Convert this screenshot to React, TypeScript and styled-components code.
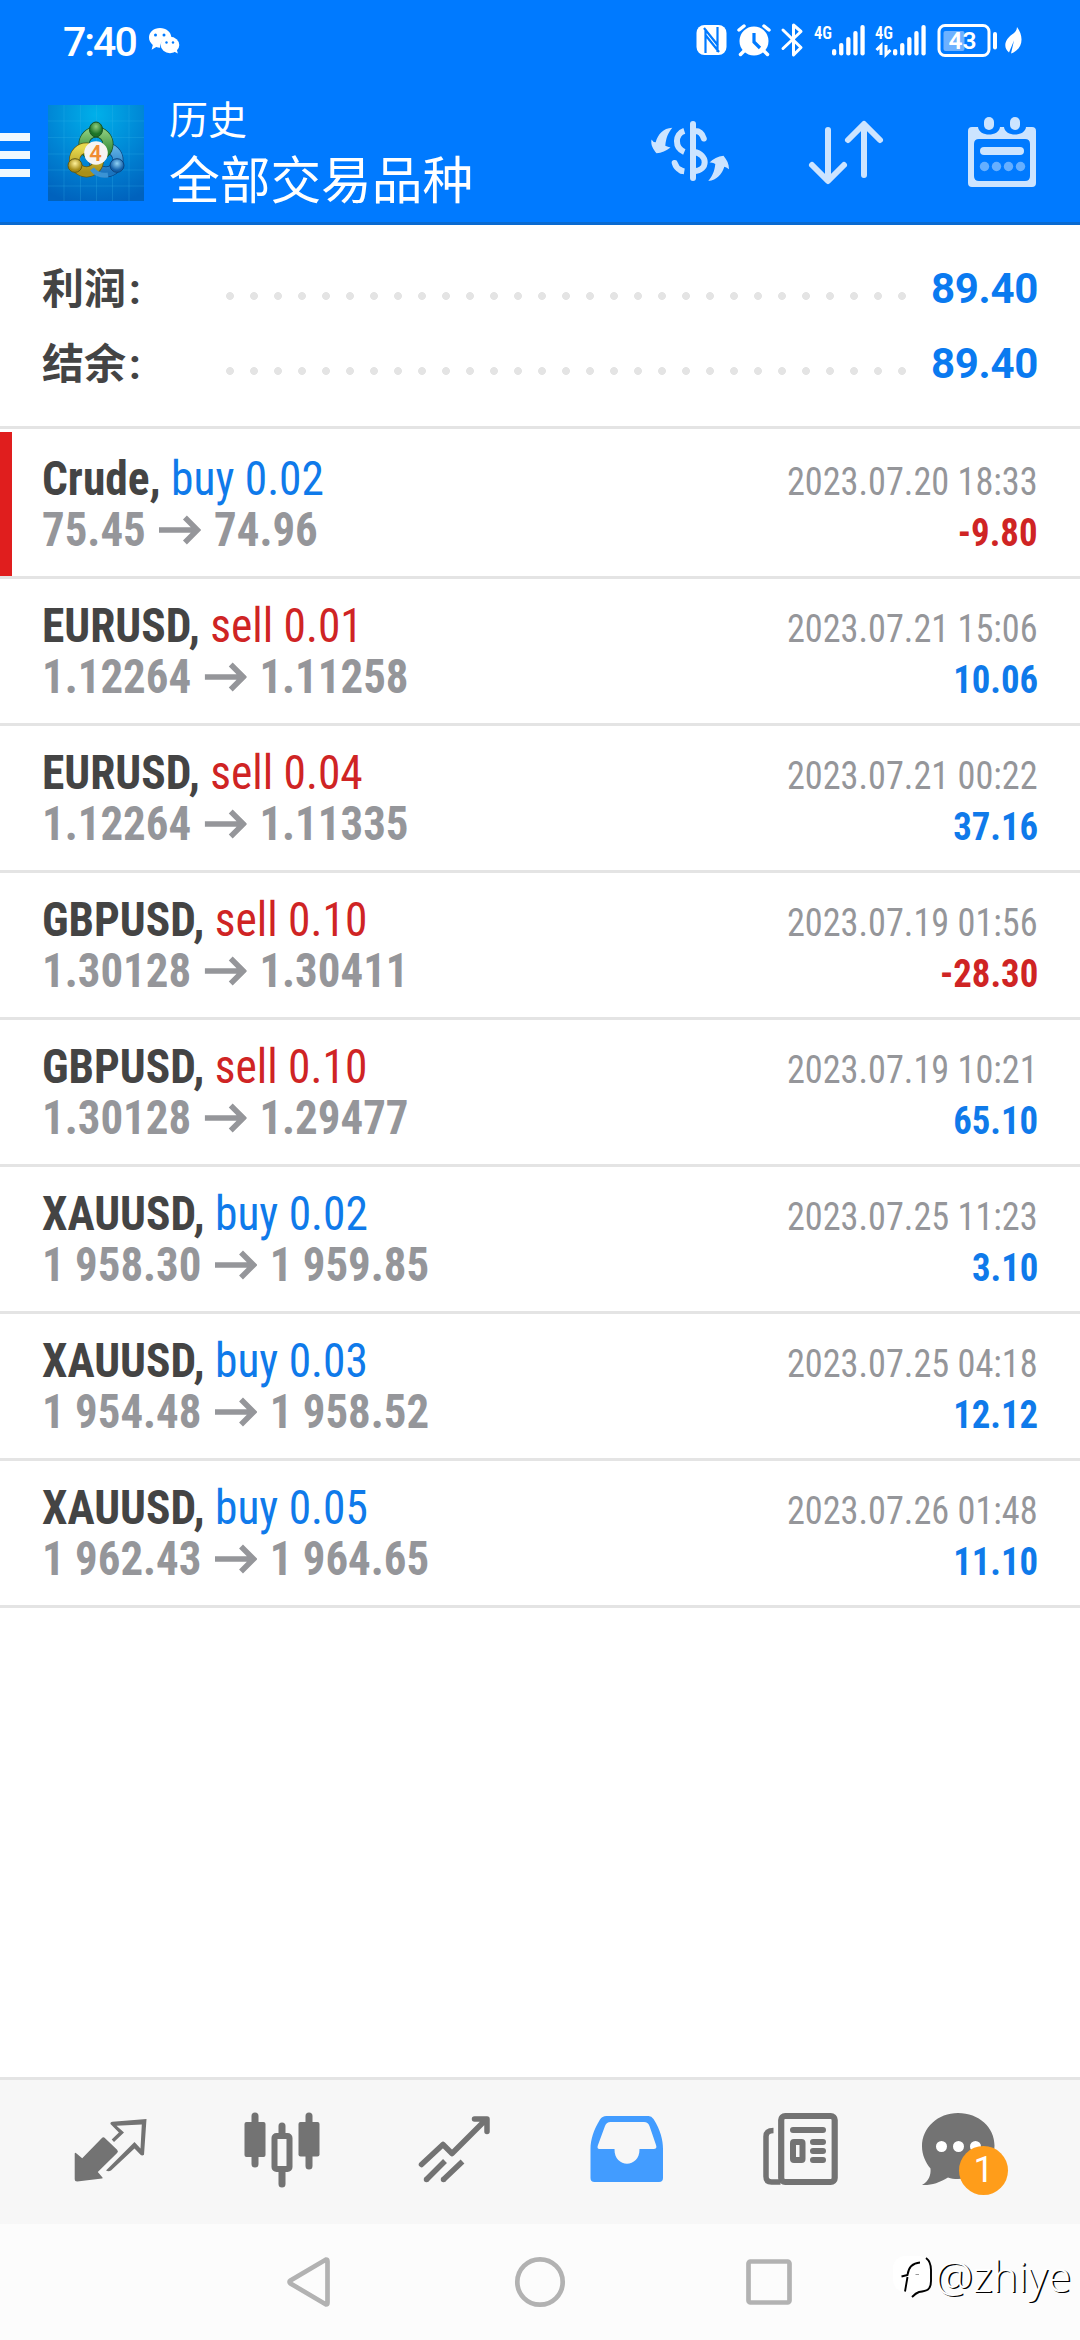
import React from 'react';
import styled, { createGlobalStyle, css } from 'styled-components';

const Global = createGlobalStyle`
  * { box-sizing: border-box; }
  body { margin: 0; background: #fff; }
`;

const cjk = css`font-family: Roboto, "Noto Sans CJK SC", sans-serif;`;
const condensed = css`
  font-family: "Roboto Condensed", Roboto, sans-serif;
  font-stretch: 75%;
`;

const Screen = styled.div`
  width: 1080px;
  height: 2340px;
  display: flex;
  flex-direction: column;
  background: #fff;
  overflow: hidden;
  ${cjk}
`;

const Header = styled.header`
  height: 225px;
  background: #007aff;
  border-bottom: 3px solid #0a6ad0;
  display: flex;
  flex-direction: column;
`;

const StatusBar = styled.div`
  height: 84px;
  display: flex;

  svg:last-child { margin-left: auto; }
`;

const Clock = styled.div`
  width: 146px;
  padding-left: 63px;
  color: #fff;
  font-size: 41px;
  font-weight: 500;
  line-height: 84px;
  font-family: Roboto, sans-serif;
  letter-spacing: -2px;
  white-space: nowrap;
`;

const AppBar = styled.div`
  height: 138px;
  display: flex;
`;

const Burger = styled.div`
  width: 48px;
  display: flex;
  flex-direction: column;
  gap: 10px;
  padding-top: 49px;
`;

const BurgerLine = styled.i`
  width: 30px;
  height: 8px;
  background: #f0f8ff;
`;

const LogoSlot = styled.div`
  padding-top: 21px;
`;

const Titles = styled.div`
  flex: 1;
  padding: 14px 0 0 25px;
  color: #fff;
  white-space: nowrap;
`;

const Subtitle = styled.div`
  font-size: 39px;
  line-height: 46px;
`;

const Title = styled.div`
  font-size: 50.7px;
  line-height: 68px;
  margin-top: 4px;
`;

const Summary = styled.section`
  height: 204px;
  padding: 24px 42px 0 42px;
  border-bottom: 3px solid #e4e4e4;
`;

const SummaryRow = styled.div`
  height: 75px;
  display: flex;
  align-items: center;
`;

const SummaryLabel = styled.span`
  width: 184px;
  margin-top: -3px;
  font-size: 42px;
  font-weight: 700;
  color: #444;
`;

const Colon = styled.span`
  margin-left: 3px;
`;

const Dots = styled.span`
  width: 696px;
  height: 8px;
  margin-top: 18px;
  background: radial-gradient(circle at 4px 4px, #e4e4e4 3.6px, transparent 4.2px) 0 0 / 24px 8px repeat-x;
`;

const SummaryValue = styled.span`
  flex: 1;
  margin-top: 4px;
  text-align: right;
  font-size: 42px;
  font-weight: 700;
  letter-spacing: -0.3px;
  color: #0a7af0;
  white-space: nowrap;
`;

const List = styled.main`
  flex: 1;
  padding-top: 3px;
`;

const Deal = styled.article`
  height: 147px;
  display: flex;
  justify-content: space-between;
  padding-right: 42px;
  border-bottom: 3px solid #e4e4e4;
  ${condensed}
`;

const Marker = styled.i<{ $on: boolean }>`
  width: 12px;
  margin-right: 30px;
  background: ${p => (p.$on ? '#e01e1e' : 'transparent')};
`;

const Column = styled.div<{ $end?: boolean }>`
  display: flex;
  flex-direction: column;
  flex: 1;
  align-items: ${p => (p.$end ? 'flex-end' : 'flex-start')};
  line-height: 51px;
  white-space: pre;
  padding-top: ${p => (p.$end ? 25 : 21)}px;
`;

const Instrument = styled.div`
  font-size: 48px;
  font-weight: 700;
  color: #444;
  transform: scaleX(0.946);
  transform-origin: left;
`;

const Side = styled.span<{ $sell: boolean }>`
  font-weight: 400;
  color: ${p => (p.$sell ? '#cf2424' : '#0f7aea')};
`;

const Prices = styled.div`
  display: flex;
  align-items: center;
  height: 51px;
  font-size: 48px;
  font-weight: 700;
  color: #95969a;
  transform: scaleX(0.935);
  transform-origin: left;
`;

const ArrowIcon = styled.svg`
  width: 45px;
  height: 30px;
  margin: 0 14px;
`;

const Time = styled.div`
  font-size: 39px;
  color: #95969a;
  transform: scaleX(0.93);
  transform-origin: right;
`;

const Profit = styled.div<{ $loss: boolean }>`
  font-size: 39px;
  font-weight: 700;
  color: ${p => (p.$loss ? '#cf2424' : '#0f7aea')};
  transform: scaleX(0.943);
  transform-origin: right;
`;

const TabBar = styled.nav`
  height: 147px;
  display: flex;
  padding-left: 21px;
  background: #f7f7f7;
  border-top: 3px solid #e4e4e4;
`;

const Tab = styled.div`
  position: relative;
  width: 173px;
  display: flex;
  justify-content: center;
  padding-top: 22px;

  svg { overflow: visible; }
`;

const Badge = styled.span`
  position: absolute;
  left: 73px;
  top: 66px;
  width: 49px;
  height: 49px;
  border-radius: 50%;
  background: #ff9d1a;
  color: #fff;
  font-size: 36px;
  line-height: 49px;
  text-align: center;
`;

const SystemNav = styled.footer`
  position: relative;
  height: 116px;
  background: #fcfcfc;
  display: flex;
`;

const Watermark = styled.div`
  position: absolute;
  right: 9px;
  top: 28px;
  display: flex;
  align-items: center;
  font-family: "Noto Sans", sans-serif;
  font-size: 42.5px;
  font-weight: 300;
  line-height: 46px;
  color: #fff;
  text-shadow: 1.5px 1.2px 0 #000;
`;

/* Drawings share the screen's coordinate space through their view boxes. */
const Drawing = ({ x, y, w, h, children }: { x: number; y: number; w: number; h: number; children: React.ReactNode }) => (
  <svg width={w} height={h} viewBox={`${x} ${y} ${w} ${h}`} fill="none">{children}</svg>
);

const WeChat = () => (
  <Drawing x={146} y={0} w={40} h={84}>
    <path d="M160 28c-6.300 0-11 4.200-11 9.600 0 3 1.400 5.500 3.800 7.300l-1.200 4.800 4.600-2.600c1.300.4 2.500.6 3.900.6 0-6 4.800-10.400 11.300-10.400C171 32 166.200 28 160 28z" fill="#fff" />
    <ellipse cx="170" cy="45" rx="9.300" ry="8.200" fill="#fff" />
    <path d="M173 51l4.800 2.600-1.200-5z" fill="#fff" />
    <g fill="#007aff"><circle cx="155.500" cy="35" r="1.500" /><circle cx="164" cy="35" r="1.500" /><circle cx="166.500" cy="42.500" r="1.200" /><circle cx="173" cy="42.500" r="1.200" /></g>
  </Drawing>
);

const SignalBars = ({ x }: { x: number }) => (
  <g fill="#fff">
    {[0, 1, 2, 3, 4].map(i => (
      <rect key={i} x={x + i * 7.100} y={49 - i * 6} width="4.300" height={6.500 + i * 6} rx="2.100" />
    ))}
  </g>
);

const StatusIcons = () => (
  <Drawing x={690} y={0} w={390} h={84}>
    <rect x="696.500" y="25" width="30" height="30" rx="8" fill="#fff" />
    <path d="M705.500 53V29M704 28l14 17.500M717.500 27v25M719 52l-14-17.500" stroke="#007aff" strokeWidth="2.200" />
    <circle cx="754" cy="41" r="14.500" fill="#fff" />
    <path d="M739 30l5-4M769 30l-5-4M744 51l-3.500 3.500M764 51l3.500 3.500" stroke="#fff" strokeWidth="3.500" strokeLinecap="round" />
    <path d="M754 33v9l6 6" stroke="#007aff" strokeWidth="3.200" />
    <path d="M783 30l18 17.500-7.500 7.500V25l7.500 6.500L783 48.500" stroke="#fff" strokeWidth="3" strokeLinejoin="round" strokeLinecap="round" />
    <text x="814" y="39" fontFamily="Roboto Condensed, Roboto" fontSize="19" fontWeight="600" fill="#fff" textLength="18" lengthAdjust="spacingAndGlyphs">4G</text>
    <SignalBars x={832} />
    <text x="875" y="39" fontFamily="Roboto Condensed, Roboto" fontSize="19" fontWeight="600" fill="#fff" textLength="18" lengthAdjust="spacingAndGlyphs">4G</text>
    <SignalBars x={893} />
    <path d="M881 55V45.500l-4.500 4.500M886 45v9.500l4.500-4.500" stroke="#fff" strokeWidth="3" />
    <rect x="939" y="25.500" width="50" height="30" rx="6" stroke="#fff" strokeWidth="3" />
    <rect x="943.500" y="31" width="21" height="20" rx="2" fill="#6db1ff" />
    <rect x="993" y="32" width="4" height="17.500" rx="2" fill="#fff" />
    <text x="948.500" y="49" fontFamily="Roboto" fontSize="24" fontWeight="600" fill="#fff" textLength="28" lengthAdjust="spacingAndGlyphs">43</text>
    <path d="M1017 27c7 9 6.500 22-6 26.500l3-13-5 12c-7-6-3-14 3-18 3-2 5-4.500 5-7.500z" fill="#fff" />
  </Drawing>
);

const Logo = () => (
  <svg width="96" height="96" viewBox="0 0 96 96">
    <defs>
      <radialGradient id="sky" cx=".5" cy=".1" r=".95"><stop offset="0" stopColor="#00b0ea" /><stop offset=".55" stopColor="#0084d4" /><stop offset="1" stopColor="#0062bd" /></radialGradient>
      <linearGradient id="green" x2="0" y2="1"><stop stopColor="#86c878" /><stop offset="1" stopColor="#237f2b" /></linearGradient>
      <linearGradient id="gold" x2="0" y2="1"><stop stopColor="#e6d84e" /><stop offset="1" stopColor="#a98f18" /></linearGradient>
      <linearGradient id="azure" x2="0" y2="1"><stop stopColor="#5fb0e4" /><stop offset="1" stopColor="#1a74bf" /></linearGradient>
      <radialGradient id="greenBall" cy=".3"><stop stopColor="#8fce7e" /><stop offset="1" stopColor="#1c7427" /></radialGradient>
      <radialGradient id="goldBall" cy=".35"><stop stopColor="#fff29a" /><stop offset="1" stopColor="#a58a14" /></radialGradient>
      <radialGradient id="azureBall" cy=".35"><stop stopColor="#8fd2f6" /><stop offset="1" stopColor="#125fa8" /></radialGradient>
    </defs>
    <rect width="96" height="96" fill="url(#sky)" />
    <path d="M0 16h96M0 32.500h96M0 49h96M0 65h96M0 81h96M16 0v96M32.500 0v96M48.500 0v96M64.500 0v96M81 0v96" stroke="#35b6ea" strokeOpacity=".3" strokeWidth=".8" />
    <g fill="none">
      <circle cx="58" cy="55" r="12" stroke="#0b4480" strokeWidth="11" />
      <circle cx="58" cy="55" r="12" stroke="url(#azure)" strokeWidth="9.500" />
      <circle cx="48" cy="39" r="12" stroke="#165022" strokeWidth="11" />
      <circle cx="48" cy="39" r="12" stroke="url(#green)" strokeWidth="9.500" />
      <circle cx="38.500" cy="55" r="12" stroke="#635a12" strokeWidth="11" />
      <circle cx="38.500" cy="55" r="12" stroke="url(#gold)" strokeWidth="9.500" />
      <path d="M44 64c4 5 10 7 16 6" stroke="#3b93d4" strokeWidth="5" />
    </g>
    <ellipse cx="48" cy="24.500" rx="6.500" ry="7.500" fill="url(#greenBall)" stroke="#165022" />
    <ellipse cx="27" cy="60.500" rx="7" ry="6.800" fill="url(#goldBall)" stroke="#635a12" />
    <ellipse cx="69" cy="60.500" rx="7" ry="6.800" fill="url(#azureBall)" stroke="#0b4480" />
    <circle cx="48" cy="48" r="11.800" fill="#f6f4f2" />
    <text x="47.500" y="56" textAnchor="middle" fontFamily="Roboto" fontWeight="600" fontSize="22" fill="#f08c32">4</text>
  </svg>
);

const Toolbar = () => (
  <Drawing x={640} y={84} w={440} h={138}>
    <g stroke="#cce4ff" strokeWidth="6">
      <path d="M693 124v54M703.800 138.500C702.500 134 700 131 695 131M674.700 163C675.500 166 678 169 681 170.500" strokeLinecap="round" />
      <path d="M684.300 130.800C674.500 134 674.500 148 684.300 152M680 170c1.500.8 3 1.200 4.300 1.400M694 152c14 2 14.500 18.500 0 19.200" />
    </g>
    <path d="M672.300 127.700C663 128.300 658 134 655.700 142.300Q653 142.300 651.500 139.500C650.500 145 653 149 656.500 153.300Q664 152.500 670.500 147.500Q668 147 665.300 145.700C666 138 668 133 672.300 127.700zM708.300 181C717 180.300 722 174 724.300 166.800Q726 167 729 169.200C729 164 727 160 723.500 155.800Q715 157 709.500 162.500Q713 162 715.300 164C714.500 171 712.500 176 708.300 181z" fill="#cce4ff" />
    <path d="M828 130v50M812 165l16 16 16-16M864 175v-50M848 140l16-16 16 16" stroke="#cce4ff" strokeWidth="6" strokeLinecap="round" strokeLinejoin="round" />
    <path fillRule="evenodd" d="M972 127h6c1 10 21 10 22 0h4c1 10 21 10 22 0h6q4 0 4 4v52q0 4-4 4h-60q-4 0-4-4v-52q0-4 4-4zM979 139q-5 0-5 5v32q0 5 5 5h46q5 0 5-5v-32q0-5-5-5z" fill="#cce4ff" />
    <rect x="984" y="117" width="10" height="13" rx="5" fill="#cce4ff" /><rect x="1010" y="117" width="10" height="13" rx="5" fill="#cce4ff" />
    <rect x="980" y="147" width="44" height="8" rx="4" fill="#cce4ff" />
    <g fill="#66afff"><circle cx="984.500" cy="166.500" r="4.700" /><circle cx="996.500" cy="166.500" r="4.700" /><circle cx="1008.500" cy="166.500" r="4.700" /><circle cx="1020.500" cy="166.500" r="4.700" /></g>
  </Drawing>
);

const gray = '#737373';

const tabs = [
  <g fill={gray}>
    <path d="M74.200 2154q0-1.800 1.500-.8l6 5 19.500-20q1.700-1.700 3.400 0l12 11.500q1.700 1.700 0 3.400l-19.300 18.900 4.700 5.500q.5.800-.5 1l-24.800 3q-2.500 0-2.500-2.500z" />
    <path d="M110 2124q-.5-2 2-2.300l34-2.700-2.500 35.700q-1.800 1.400-3.500 0l-6-6.200-23.500 22q-2.500 1.500-5 0l28.500-28.500 6 6.500 1.300-24-25.300 1.300 7.500 6.700-10 9.500-2.300-2.500 7.200-7z" />
  </g>,
  <g>
    <path d="M254.500 2116v48M308.500 2116v50M281.500 2126v58" stroke={gray} strokeWidth="7" strokeLinecap="round" />
    <rect x="244" y="2122" width="21" height="35" rx="2" fill={gray} /><rect x="298" y="2122" width="21" height="34.500" rx="2" fill={gray} />
    <rect x="274" y="2136" width="15" height="33" rx="2" fill="#f7f7f7" stroke={gray} strokeWidth="6" />
  </g>,
  <g stroke={gray} strokeWidth="5.500">
    <path d="M421 2164.500l21.500-20 9 9 33-33M474 2119h12.500v12.500" strokeLinecap="round" strokeLinejoin="round" />
    <path d="M426 2179.500l18.500-18.500M443 2179.500l19-18" /><path d="M426 2179.500h.01M443 2179.500h.01" strokeLinecap="round" />
  </g>,
  <path fillRule="evenodd" fill="#429cff" d="M606 2116h42q3 0 5 3c7 11 9.500 21 9.500 30v29q0 4-4 4h-64.500q-4 0-4-4v-29c0-9 3-19 9.500-29.500q2-3.500 6.500-3.500zM610 2122q-4 0-5.500 4l-7 19q-1.500 4 1.500 4h15c-.5 19.500 25.500 19.500 25 0h14q4 0 2.500-4l-6.500-19q-1.500-4-5.500-4z" />,
  <g stroke={gray}>
    <rect x="780.700" y="2116" width="53.500" height="66" rx="4" strokeWidth="6.200" />
    <path d="M773 2130.500q-7.500 0-7.500 6v40q0 5.500 5.500 5.500h9" strokeWidth="5.500" />
    <path d="M792.500 2130h30M812.500 2142h10M812.500 2151h10M812.500 2160h10" strokeWidth="6" strokeLinecap="round" />
    <rect x="792.500" y="2142" width="9.500" height="18" rx="1" strokeWidth="6" />
  </g>,
  <g>
    <path d="M957.500 2113c21 0 36.500 14.500 36.500 32.500 0 19-16.500 33.500-36.500 33.500-4 0-7-.5-10-1.500-9 5.500-17 8-26 7.500 7-4 9-10 8.500-16.500-5-6-8.500-14-8.500-22 0-19 16-33.500 36-33.500z" fill={gray} />
    <g fill="#fff"><circle cx="941" cy="2146.500" r="5.500" /><circle cx="958" cy="2146.500" r="5.500" /><circle cx="975" cy="2146.500" r="5.500" /></g>
  </g>,
];

const deals: [string, string, string, string, string, string][] = [
  ['Crude', 'buy 0.02', '75.45', '74.96', '2023.07.20 18:33', '-9.80'],
  ['EURUSD', 'sell 0.01', '1.12264', '1.11258', '2023.07.21 15:06', '10.06'],
  ['EURUSD', 'sell 0.04', '1.12264', '1.11335', '2023.07.21 00:22', '37.16'],
  ['GBPUSD', 'sell 0.10', '1.30128', '1.30411', '2023.07.19 01:56', '-28.30'],
  ['GBPUSD', 'sell 0.10', '1.30128', '1.29477', '2023.07.19 10:21', '65.10'],
  ['XAUUSD', 'buy 0.02', '1 958.30', '1 959.85', '2023.07.25 11:23', '3.10'],
  ['XAUUSD', 'buy 0.03', '1 954.48', '1 958.52', '2023.07.25 04:18', '12.12'],
  ['XAUUSD', 'buy 0.05', '1 962.43', '1 964.65', '2023.07.26 01:48', '11.10'],
];

export default function App() {
  return (
    <Screen>
      <Global />
      <Header>
        <StatusBar>
          <Clock>7:40</Clock>
          <WeChat />
          <StatusIcons />
        </StatusBar>
        <AppBar>
          <Burger><BurgerLine /><BurgerLine /><BurgerLine /></Burger>
          <LogoSlot><Logo /></LogoSlot>
          <Titles>
            <Subtitle>历史</Subtitle>
            <Title>全部交易品种</Title>
          </Titles>
          <Toolbar />
        </AppBar>
      </Header>
      <Summary>
        {['利润', '结余'].map(label => (
          <SummaryRow key={label}>
            <SummaryLabel>{label}<Colon>:</Colon></SummaryLabel>
            <Dots />
            <SummaryValue>89.40</SummaryValue>
          </SummaryRow>
        ))}
      </Summary>
      <List>
        {deals.map(([symbol, side, open, close, time, profit], i) => (
          <Deal key={i}>
            <Marker $on={i === 0} />
            <Column>
              <Instrument>{symbol}, <Side $sell={side.startsWith('sell')}>{side}</Side></Instrument>
              <Prices>
                {open}
                <ArrowIcon viewBox="0 0 42 30" preserveAspectRatio="none" fill="none"><path d="M0 15h39M26 2.500L38.500 15 26 27.500" stroke="#95969a" strokeWidth="5.500" /></ArrowIcon>
                {close}
              </Prices>
            </Column>
            <Column $end>
              <Time>{time}</Time>
              <Profit $loss={profit.startsWith('-')}>{profit}</Profit>
            </Column>
          </Deal>
        ))}
      </List>
      <TabBar>
        {tabs.map((icon, i) => (
          <Tab key={i}>
            <Drawing x={59.500 + i * 173} y={2102} w={96} h={96}>{icon}</Drawing>
            {i === 5 && <Badge>1</Badge>}
          </Tab>
        ))}
      </TabBar>
      <SystemNav>
        <Drawing x={0} y={2224} w={880} h={116}>
          <path d="M326 2259.500q1.500 0 1.500 2v41q0 2-1.500 2l-35.500-21q-2-1.500 0-3z" stroke="#b2b2b2" strokeWidth="4.700" />
          <circle cx="540" cy="2282" r="22.700" stroke="#b2b2b2" strokeWidth="4.700" />
          <rect x="748.500" y="2261.500" width="41" height="41" rx="2" stroke="#b2b2b2" strokeWidth="4.700" />
        </Drawing>
        <Watermark>
          <Drawing x={892} y={2257} w={44} h={48}>
            <rect x="894" y="2261" width="37" height="36" rx="12" fill="#fff" />
            <path d="M927 2263c4 3 5 7 5 12v11c0 9-4 10-12 11-3 1-5 3-7 5M908.500 2282l-2.500 14.500M902.500 2281.500l6-1.500c1-8 5-12 12.500-12.500" stroke="#000" strokeWidth="1.900" />
            <path d="M916.500 2279.500h3.500" stroke="#999" />
          </Drawing>
          @zhiye
        </Watermark>
      </SystemNav>
    </Screen>
  );
}
